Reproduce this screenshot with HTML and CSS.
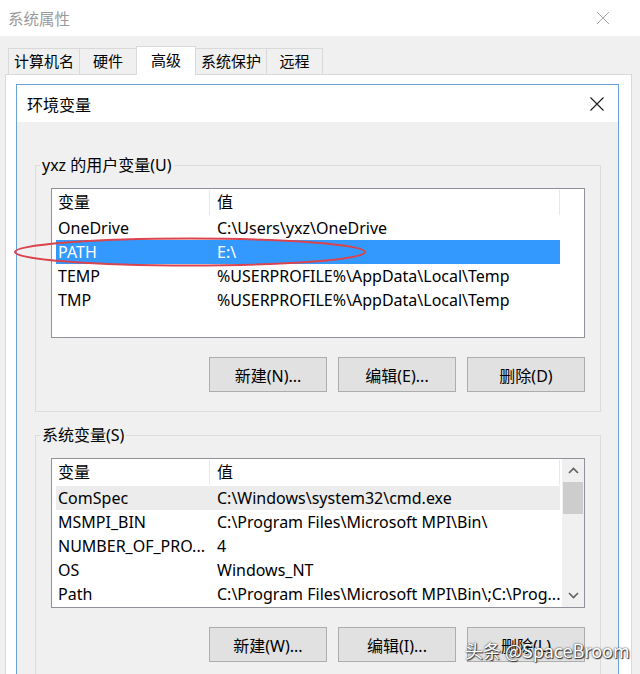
FILE: index.html
```html
<!DOCTYPE html>
<html lang="zh-CN">

<head>
    <meta charset="UTF-8">
    <meta name="viewport" content="width=device-width, initial-scale=1.0">
    <title>系统属性</title>
    <link rel="stylesheet" href="styles.css">
</head>

<body>
    <div class="titlebar">
        <span class="title">系统属性</span>
        <svg class="close-light" width="14" height="14" viewBox="0 0 14 14">
            <path d="M1 1L13 13M13 1L1 13" stroke="#a8a8a8" stroke-width="1" fill="none" />
        </svg>
    </div>

    <div class="tabs">
        <div class="tab">计算机名</div>
        <div class="tab">硬件</div>
        <div class="tab active">高级</div>
        <div class="tab">系统保护</div>
        <div class="tab">远程</div>
    </div>

    <div class="tab-panel">
        <div class="dialog">
            <div class="dialog-title">
                <span>环境变量</span>
                <svg width="14" height="14" viewBox="0 0 14 14">
                    <path d="M0.5 0.5L13.5 13.5M13.5 0.5L0.5 13.5" stroke="#1a1a1a" stroke-width="1.1" fill="none" />
                </svg>
            </div>

            <div class="dialog-body">
                <fieldset class="group">
                    <legend>yxz 的用户变量(U)</legend>
                    <div class="group-body">
                        <div class="list">
                            <div class="list-main">
                                <div class="list-head">
                                    <span class="col-name">变量</span>
                                    <span class="col-value">值</span>
                                </div>
                                <div class="row">
                                    <span class="col-name">OneDrive</span>
                                    <span class="col-value">C:\Users\yxz\OneDrive</span>
                                </div>
                                <div class="row selected">
                                    <span class="col-name">PATH</span>
                                    <span class="col-value">E:\</span>
                                </div>
                                <div class="row">
                                    <span class="col-name">TEMP</span>
                                    <span class="col-value">%USERPROFILE%\AppData\Local\Temp</span>
                                </div>
                                <div class="row">
                                    <span class="col-name">TMP</span>
                                    <span class="col-value">%USERPROFILE%\AppData\Local\Temp</span>
                                </div>
                            </div>
                        </div>
                        <div class="buttons">
                            <button type="button">新建(N)...</button>
                            <button type="button">编辑(E)...</button>
                            <button type="button">删除(D)</button>
                        </div>
                    </div>
                </fieldset>

                <fieldset class="group group-system">
                    <legend>系统变量(S)</legend>
                    <div class="group-body">
                        <div class="list">
                            <div class="list-main">
                                <div class="list-head">
                                    <span class="col-name">变量</span>
                                    <span class="col-value">值</span>
                                </div>
                                <div class="row hover">
                                    <span class="col-name">ComSpec</span>
                                    <span class="col-value">C:\Windows\system32\cmd.exe</span>
                                </div>
                                <div class="row">
                                    <span class="col-name">MSMPI_BIN</span>
                                    <span class="col-value">C:\Program Files\Microsoft MPI\Bin\</span>
                                </div>
                                <div class="row">
                                    <span class="col-name">NUMBER_OF_PRO...</span>
                                    <span class="col-value">4</span>
                                </div>
                                <div class="row">
                                    <span class="col-name">OS</span>
                                    <span class="col-value">Windows_NT</span>
                                </div>
                                <div class="row">
                                    <span class="col-name">Path</span>
                                    <span class="col-value">C:\Program Files\Microsoft MPI\Bin\;C:\Prog...</span>
                                </div>
                            </div>
                            <div class="scrollbar">
                                <div class="arrow">
                                    <svg width="11" height="7" viewBox="0 0 11 7">
                                        <path d="M1 6L5.5 1.5L10 6" stroke="#606060" stroke-width="1.6" fill="none" />
                                    </svg>
                                </div>
                                <div class="thumb"></div>
                                <div class="track"></div>
                                <div class="arrow">
                                    <svg width="11" height="7" viewBox="0 0 11 7">
                                        <path d="M1 1L5.5 5.5L10 1" stroke="#606060" stroke-width="1.6" fill="none" />
                                    </svg>
                                </div>
                            </div>
                        </div>
                        <div class="buttons">
                            <button type="button">新建(W)...</button>
                            <button type="button">编辑(I)...</button>
                            <button type="button">删除(L)</button>
                        </div>
                    </div>
                </fieldset>
            </div>
        </div>
    </div>

    <!-- red mark drawn over the PATH row -->
    <svg class="mark" width="356" height="32" viewBox="0 0 356 32">
        <ellipse cx="178" cy="16" rx="175" ry="13.5" stroke="#d9444e" stroke-width="2" fill="none" />
    </svg>

    <div class="watermark">头条 @SpaceBroom</div>
</body>

</html>
```

FILE: styles.css
```css
* {
    box-sizing: border-box;
    margin: 0;
    padding: 0;
}

body {
    width: 640px;
    height: 674px;
    overflow: hidden;
    position: relative;
    background-color: #f0f0f0;
    font-family: "Noto Sans", "Noto Sans CJK SC", sans-serif;
    font-size: 16px;
    color: #000;
}

.titlebar {
    height: 36px;
    background-color: #fff;
    display: flex;
    align-items: center;
    justify-content: space-between;
    padding: 0 30px 0 8px;
}

.titlebar .title {
    color: #9a9a9a;
    font-size: 15.5px;
}

.titlebar svg,
.dialog-title svg {
    display: block;
}

/* tab strip */
.tabs {
    height: 38px;
    display: flex;
    align-items: flex-end;
    padding-left: 8px;
    font-size: 15px;
}

.tab {
    height: 26px;
    min-width: 57px;
    padding: 0 5px;
    border: 1px solid #d9d9d9;
    border-bottom: none;
    border-right: none;
    line-height: 24px;
    text-align: center;
}

.tab:last-child {
    border-right: 1px solid #d9d9d9;
}

.tab.active {
    height: 29px;
    min-width: 60px;
    margin-bottom: -1px;
    background-color: #fff;
    border-right: 1px solid #d9d9d9;
    line-height: 26px;
    position: relative;
    z-index: 1;
}

.tab.active + .tab {
    border-left: none;
}

.tab-panel {
    margin: 0 8px 0 5px;
    height: 620px;
    background-color: #fff;
    border: 1px solid #d9d9d9;
    padding: 9px 12px 0 10px;
}

/* environment variables dialog */
.dialog {
    height: 620px;
    background-color: #f0f0f0;
    border: 1px solid #6aa1d8;
}

.dialog-title {
    height: 37px;
    background-color: #fff;
    display: flex;
    align-items: center;
    justify-content: space-between;
    padding: 0 14px 0 10px;
}

.dialog-body {
    padding: 33px 17px 0 18px;
}

.group {
    border: 1px solid #dcdcdc;
    padding: 0;
}

.group legend {
    margin-left: 4px;
    padding: 0 2px;
    line-height: 20px;
}

.group-system {
    margin-top: 13px;
}

.group-body {
    padding: 13px 15px 19px;
}

/* list view */
.list {
    height: 150px;
    display: flex;
    background-color: #fff;
    border: 1px solid #8f9399;
}

.list-main {
    flex: 1;
    padding-left: 4px;
}

.list-head,
.row {
    width: 504px;
    display: flex;
    white-space: nowrap;
}

.list-head {
    height: 27px;
    align-items: center;
}

.list-head span {
    height: 25px;
    line-height: 25px;
    border-right: 1px solid #e8e8e8;
}

.row {
    height: 24px;
    line-height: 24px;
}

.col-name {
    width: 154px;
    padding-left: 2px;
    overflow: hidden;
}

.col-value {
    flex: 1;
    padding-left: 7px;
    overflow: hidden;
}

.row.selected {
    background-color: #3399ff;
    color: #fff;
}

.row.hover {
    background-color: #ececec;
}

.scrollbar {
    width: 22px;
    display: flex;
    flex-direction: column;
    background-color: #f0f0f0;
}

.scrollbar .arrow {
    height: 23px;
    display: flex;
    align-items: center;
    justify-content: center;
}

.scrollbar .thumb {
    height: 32px;
    margin: 0 1px;
    background-color: #cdcdcd;
}

.scrollbar .track {
    flex: 1;
}

/* buttons */
.buttons {
    display: flex;
    justify-content: flex-end;
    gap: 11px;
    margin-top: 19px;
}

button {
    width: 118px;
    height: 35px;
    background-color: #e1e1e1;
    border: 1px solid #adadad;
    font-family: inherit;
    font-size: 16px;
    color: #000;
}

/* overlays */
.mark {
    position: absolute;
    left: 12px;
    top: 236px;
}

.watermark {
    position: absolute;
    left: 465px;
    top: 637px;
    font-family: "Noto Sans CJK SC", sans-serif;
    font-size: 18px;
    color: #fff;
    text-shadow: 0 0 2px #222, 1px 1px 1px #333;
    white-space: nowrap;
}
```
